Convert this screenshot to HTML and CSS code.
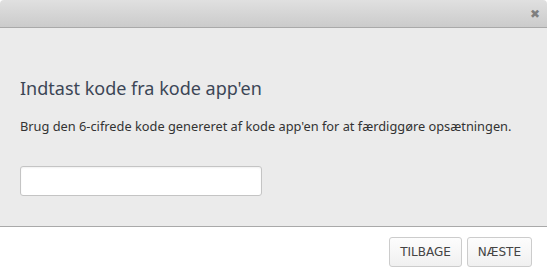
FILE: index.html
```html
<!DOCTYPE html>
<html lang="da">
<head>
    <meta charset="UTF-8">
    <meta name="viewport" content="width=device-width, initial-scale=1.0">
    <title>Kode app</title>
    <link rel="stylesheet" href="styles.css">
</head>
<body>
    <div class="dialog">
        <div class="dialog-header">
            <span class="close">&#10006;</span>
        </div>
        <div class="dialog-body">
            <h2>Indtast kode fra kode app'en</h2>
            <p>Brug den 6-cifrede kode genereret af kode app'en for at færdiggøre opsætningen.</p>
            <input type="text" class="code-input">
        </div>
        <div class="dialog-footer">
            <button class="btn">TILBAGE</button>
            <button class="btn">NÆSTE</button>
        </div>
    </div>
</body>
</html>
```

FILE: styles.css
```css
* {
    margin: 0;
    padding: 0;
    box-sizing: border-box;
}

body {
    font-family: "Noto Sans", sans-serif;
    background-color: #ffffff;
    width: 547px;
    height: 275px;
    overflow: hidden;
}

.dialog {
    display: flex;
    flex-direction: column;
    height: 275px;
}

.dialog-header {
    height: 28px;
    background: linear-gradient(#e0e0e0, #cbcbcb);
    border-bottom: 1px solid #a9a9a9;
    border-radius: 4px 4px 0 0;
    display: flex;
    justify-content: flex-end;
    align-items: center;
    padding-right: 7px;
}

.close {
    color: #7f7f7f;
    font-family: "DejaVu Sans", sans-serif;
    font-size: 12px;
    font-weight: bold;
    line-height: 1;
}

.dialog-body {
    height: 199px;
    background-color: #ebebeb;
    border-bottom: 1px solid #a9a9a9;
    padding: 49px 20px 0;
}

h2 {
    font-size: 18px;
    font-weight: normal;
    color: #3c4656;
    line-height: 22px;
}

p {
    font-size: 12.8px;
    color: #333333;
    margin-top: 19px;
    line-height: 16px;
    white-space: nowrap;
}

.code-input {
    display: block;
    width: 242px;
    height: 30px;
    margin-top: 32px;
    border: 1px solid #c4c4c4;
    border-radius: 3px;
    background-color: #ffffff;
    box-shadow: inset 0 1px 2px rgba(0, 0, 0, 0.06);
}

.dialog-footer {
    flex: 1;
    display: flex;
    justify-content: flex-end;
    align-items: flex-start;
    gap: 5px;
    padding: 10px 15px 0;
}

.btn {
    font-family: "DejaVu Sans", sans-serif;
    font-size: 12px;
    color: #444444;
    height: 30px;
    padding: 0 10px;
    background: linear-gradient(#fdfdfd, #f0f0f0);
    border: 1px solid #cccccc;
    border-radius: 3px;
    cursor: pointer;
}
```
